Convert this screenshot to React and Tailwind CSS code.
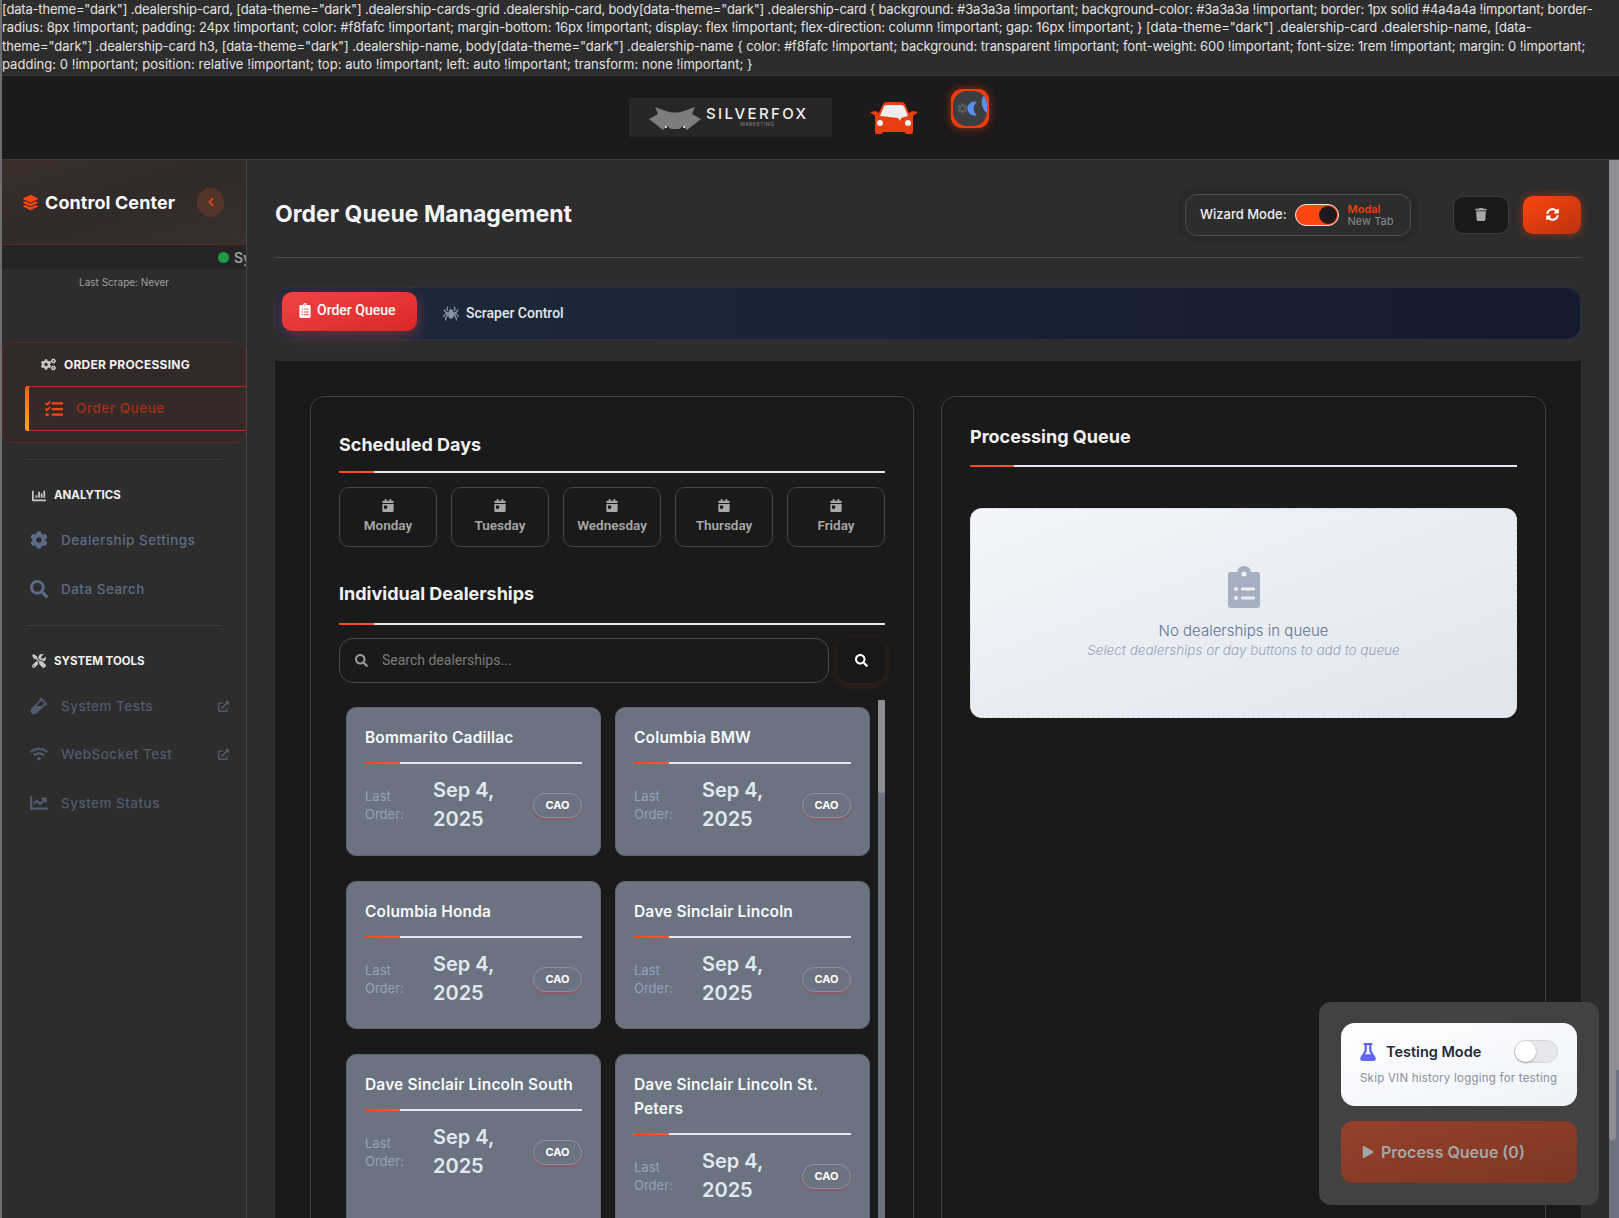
import {
  FaLayerGroup, FaChevronLeft, FaCogs, FaTasks, FaChartBar, FaCog, FaSearch, FaTools, FaVial, FaWifi,
  FaChartLine, FaExternalLinkAlt, FaClipboardList, FaSpider, FaCalendarDay, FaTrash, FaSyncAlt, FaFlask, FaPlay,
} from "react-icons/fa";

const DAYS = ["Monday", "Tuesday", "Wednesday", "Thursday", "Friday"];

const CARDS = [
  ["Bommarito Cadillac", "h-[149px]"],
  ["Columbia BMW", "h-[149px]"],
  ["Columbia Honda", "h-[148px]"],
  ["Dave Sinclair Lincoln", "h-[148px]"],
  ["Dave Sinclair Lincoln South", "h-[200px]"],
  ["Dave Sinclair Lincoln St. Peters", "h-[200px]"],
];

const CSS_LINES = [
  ['[data-theme="dark"] .dealership-card, [data-theme="dark"] .dealership-cards-grid .dealership-card, body[data-theme="dark"] .dealership-card { background: #3a3a3a !important; background-color: #3a3a3a !important; border: 1px solid #4a4a4a !important; border-', "tracking-[-0.014em]"],
  ['radius: 8px !important; padding: 24px !important; color: #f8fafc !important; margin-bottom: 16px !important; display: flex !important; flex-direction: column !important; gap: 16px !important; } [data-theme="dark"] .dealership-card .dealership-name, [data-', "tracking-[-0.006em]"],
  ['theme="dark"] .dealership-card h3, [data-theme="dark"] .dealership-name, body[data-theme="dark"] .dealership-name { color: #f8fafc !important; background: transparent !important; font-weight: 600 !important; font-size: 1rem !important; margin: 0 !important;', "tracking-[-0.007em]"],
  ["padding: 0 !important; position: relative !important; top: auto !important; left: auto !important; transform: none !important; }", "tracking-[0.002em]"],
];

function Underline({ accent = "w-[35px]" }) {
  return (
    <div className="h-[2px] bg-[#e2e8f0]">
      <div className={`h-[2px] bg-gradient-to-r from-[#ff4510] to-[#f8553a] ${accent}`} />
    </div>
  );
}

function SectionTitle({ icon: Icon, children, className = "" }) {
  return (
    <div className={`flex items-center text-[11.5px] font-bold uppercase text-[#f1f1f1] ${className}`}>
      <Icon className="mr-[8px] h-[14px] w-[14px] text-[#c8c8c8]" />
      {children}
    </div>
  );
}

function NavItem({ icon: Icon, label, external, dim }) {
  return (
    <div className={`flex items-center pl-[28px] pr-[17px] text-[13.5px] font-medium tracking-[0.035em] ${dim ? "text-[#4f5b6e]" : "text-[#5c6c85]"}`}>
      <Icon className="mr-[13px] h-[18px] w-[18px] shrink-0" />
      <span className="flex-1">{label}</span>
      {external && <FaExternalLinkAlt className="h-[11px] w-[11px] text-[#4f5b6e]" />}
    </div>
  );
}

function Sidebar() {
  return (
    <aside className="relative flex w-[245px] shrink-0 flex-col overflow-hidden border-r border-[#454545] bg-[#2d2d2d]">
      <div className="flex h-[85px] items-center border-b border-[#5a2c20] bg-gradient-to-br from-[#3a2e2a] via-[#302a28] to-[#38302d] pl-[21px] pr-[22px]">
        <FaLayerGroup className="mr-[7px] h-[15px] w-[15px] text-[#ff4510]" />
        <span className="flex-1 text-[18px] font-bold tracking-[0.005em] text-[#f8fafc]">Control Center</span>
        <div className="flex h-[29px] w-[27px] items-center justify-center rounded-full bg-[#55352b]">
          <FaChevronLeft className="h-[10px] w-[10px] text-[#e8481c]" />
        </div>
      </div>
      <div className="flex h-[24px] items-center bg-[#252525] pl-[216px]">
        <span className="h-[11px] w-[11px] shrink-0 rounded-full bg-[#1f9a4b]" />
        <span className="ml-[5px] text-[14px] font-semibold text-[#a0a0a0]">System</span>
      </div>
      <div className="mt-[6px] text-center text-[10px] text-[#a0a0a0]">Last Scrape: Never</div>

      <div className="mt-[52px] h-[101px] rounded-l-[10px] rounded-r-[12px] border border-[#5a2a20] bg-[#332a28]">
        <div className="flex h-[43px] items-center pl-[38px] text-[12px] font-bold uppercase tracking-[0.02em] text-[#f1f1f1]">
          <FaCogs className="mr-[8px] h-[15px] w-[15px] text-[#c8c8c8]" />
          Order Processing
        </div>
        <div className="relative ml-[23px] flex h-[45px] items-center border-y border-l border-[#b93416] bg-[#352a28] pl-[18px] text-[13.5px] font-medium tracking-[0.04em] text-[#a5301a]">
          <span className="absolute -left-[2px] -top-px h-[45px] w-[4px] rounded-l-[3px] bg-gradient-to-b from-[#ff5a10] to-[#ffa510]" />
          <FaTasks className="mr-[13px] h-[18px] w-[18px] text-[#ff4510]" />
          Order Queue
        </div>
      </div>

      <div className="mx-[24px] mt-[16px] h-px bg-[#3d3d3d]" />
      <SectionTitle icon={FaChartBar} className="mt-[27px] pl-[30px]">Analytics</SectionTitle>
      <div className="mt-[26px] flex flex-col gap-[28px]">
        <NavItem icon={FaCog} label="Dealership Settings" />
        <NavItem icon={FaSearch} label="Data Search" />
      </div>
      <div className="mx-[24px] mt-[26px] h-px bg-[#3d3d3d]" />
      <SectionTitle icon={FaTools} className="mt-[27px] pl-[30px]">System Tools</SectionTitle>
      <div className="mt-[26px] flex flex-col gap-[28px]">
        <NavItem icon={FaVial} label="System Tests" external dim />
        <NavItem icon={FaWifi} label="WebSocket Test" external dim />
        <NavItem icon={FaChartLine} label="System Status" dim />
      </div>
    </aside>
  );
}

function DealerCard({ name, height }) {
  return (
    <div className={`overflow-hidden rounded-[10px] border border-[#5f6673] bg-[#6b7280] px-[18px] pt-[18px] ${height}`}>
      <div className="pb-[12px] text-[15.5px] font-semibold leading-[24px] tracking-[0.01em] text-[#f8fafc]">{name}</div>
      <Underline />
      <div className="mt-[12px] flex items-center">
        <div className="w-[68px] text-[13px] leading-[18px] text-[#94a3b8]">Last<br />Order:</div>
        <div className="flex-1 text-[20px] font-semibold leading-[29px] text-[#e2e8f0]">Sep 4,<br />2025</div>
        <div className="flex h-[25px] w-[49px] items-center justify-center rounded-full border border-[#8d93a0] text-[11px] font-bold text-white shadow-[0_2px_2px_rgba(190,60,70,0.45)]">CAO</div>
      </div>
    </div>
  );
}

function ScheduledPanel() {
  return (
    <section className="h-[900px] w-[604px] shrink-0 overflow-hidden rounded-[14px] border border-[#424242] px-[28px] pt-[35px]">
      <h3 className="pb-[13px] text-[18px] font-bold leading-[26px] text-[#f1f1f1]">Scheduled Days</h3>
      <Underline />
      <div className="mt-[14px] grid grid-cols-5 gap-[14px]">
        {DAYS.map((day) => (
          <button key={day} type="button" className="flex h-[60px] flex-col items-center justify-center rounded-[10px] border border-[#464646] font-[Roboto,sans-serif] text-[13.5px] font-semibold text-[#a8a8a8]">
            <FaCalendarDay className="mb-[3px] h-[13px] w-[12px]" />
            {day}
          </button>
        ))}
      </div>

      <h3 className="mt-[34px] pb-[16px] text-[18px] font-bold leading-[26px] text-[#f1f1f1]">Individual Dealerships</h3>
      <Underline />
      <div className="mt-[13px] flex gap-[8px]">
        <div className="flex h-[45px] flex-1 items-center rounded-[14px] border border-[#484848] pl-[15px] font-[Roboto,sans-serif] text-[14px] text-[#7a7a7a]">
          <FaSearch className="mr-[14px] h-[13px] w-[13px] text-[#9a9a9a]" />
          Search dealerships...
        </div>
        <button type="button" className="flex h-[45px] w-[48px] items-center justify-center rounded-[12px] bg-[#181818] shadow-[0_2px_8px_rgba(180,60,20,0.25)]">
          <FaSearch className="h-[13px] w-[13px] text-white" />
        </button>
      </div>

      <div className="mt-[17px] flex gap-[8px]">
        <div className="ml-[7px] grid flex-1 grid-cols-2 content-start gap-x-[14px] gap-y-[25px] pt-[7px]">
          {CARDS.map(([name, height]) => (
            <DealerCard key={name} name={name} height={height} />
          ))}
        </div>
        <div className="h-[600px] w-[7px] shrink-0 bg-[#6b7280]">
          <div className="h-[93px] rounded-[2px] bg-[#8e8e93]" />
        </div>
      </div>
    </section>
  );
}

function QueuePanel() {
  return (
    <section className="h-[900px] w-[605px] shrink-0 rounded-[14px] border border-[#424242] px-[28px] pt-[27px]">
      <h3 className="pb-[15px] text-[18px] font-bold leading-[26px] text-[#f1f1f1]">Processing Queue</h3>
      <Underline accent="w-[44px]" />
      <div className="mt-[41px] flex h-[210px] flex-col items-center rounded-[12px] border border-dashed border-[#d5dbe4] bg-gradient-to-br from-[#f3f5f9] to-[#e0e5ee] pt-[57px]">
        <svg viewBox="0 0 32 42" className="h-[42px] w-[32px]">
          <path d="M3 6 L9 6 Q10 0 16 0 Q22 0 23 6 L29 6 Q32 6 32 9 L32 39 Q32 42 29 42 L3 42 Q0 42 0 39 L0 9 Q0 6 3 6 Z" fill="#a6afbf" />
          <circle cx="16" cy="8" r="2.6" fill="#eceff4" />
          <circle cx="8" cy="23" r="2" fill="#eceff4" />
          <circle cx="8" cy="32" r="2" fill="#eceff4" />
          <rect x="13" y="21.5" width="14" height="3" rx="1" fill="#eceff4" />
          <rect x="13" y="30.5" width="14" height="3" rx="1" fill="#eceff4" />
        </svg>
        <div className="mt-[13px] text-[15px] font-light leading-[20px] text-[#64748b]">No dealerships in queue</div>
        <div className="text-[13.5px] font-light italic leading-[19px] text-[#94a3b8]">Select dealerships or day buttons to add to queue</div>
      </div>
    </section>
  );
}

function FloatingPanel() {
  return (
    <div className="absolute left-[1317px] top-[1002px] flex h-[203px] w-[280px] flex-col gap-[15px] rounded-[12px] bg-[#424242] px-[22px] pt-[21px]">
      <div className="h-[83px] rounded-[14px] bg-gradient-to-br from-white to-[#eef2f8] px-[19px] pt-[17px]">
        <div className="flex items-center">
          <FaFlask className="mr-[10px] h-[18px] w-[16px] text-[#6366f1]" />
          <span className="flex-1 text-[14.5px] font-semibold text-[#1e293b]">Testing Mode</span>
          <div className="h-[23px] w-[44px] rounded-full border border-[#d5d5da] bg-[#e5e7eb]">
            <div className="h-[21px] w-[21px] rounded-full bg-white shadow-[0_1px_2px_rgba(0,0,0,0.3)]" />
          </div>
        </div>
        <div className="mt-[7px] whitespace-nowrap text-[11.5px] tracking-[0.02em] text-[#8890a0]">Skip VIN history logging for testing</div>
      </div>
      <button type="button" className="flex h-[62px] items-center rounded-[12px] bg-gradient-to-br from-[#96412a] to-[#7c3623] pl-[21px] text-[16px] font-semibold text-[#a6a6a6]">
        <FaPlay className="mr-[7px] h-[12px] w-[12px]" />
        Process Queue (0)
      </button>
    </div>
  );
}

function Logo() {
  return (
    <div className="flex h-[39px] w-[203px] items-center rounded-[1px] bg-[#282627] pl-[20px]">
      <svg viewBox="0 0 52 24" className="mr-[5px] h-[24px] w-[52px] shrink-0">
        <path d="M0 13 L9 8 L6 1 L17 5 Q26 8 35 5 L46 1 L43 8 L52 13 L38 24 L34 20 L30 23 L22 23 L18 20 L14 24 Z" fill="#7d7d7d" />
        <circle cx="17" cy="21" r="1" fill="#eee" />
        <circle cx="35" cy="21" r="1" fill="#eee" />
      </svg>
      <div className="flex flex-col items-center">
        <span className="text-[15px] font-medium leading-[14px] tracking-[0.16em] text-[#f2f2f2]">SILVERFOX</span>
        <span className="text-[5px] leading-[7px] tracking-[0.1em] text-[#8a8a8a]">MARKETING</span>
      </div>
    </div>
  );
}

function CarIcon() {
  return (
    <svg viewBox="0 0 48 32" className="h-[32px] w-[48px]">
      <path d="M9 11 L13 2 Q14 0 17 0 L31 0 Q34 0 35 2 L39 11 L42 9 L48 10 L43 14 L43 30 Q43 32 41 32 L37 32 Q35 32 35 30 L13 30 Q13 32 11 32 L7 32 Q5 32 5 30 L5 14 L0 10 L6 9 Z" fill="#e93f10" />
      <path d="M10 14 L14 4 Q15 3 17 3 L31 3 Q33 3 34 4 L38 14 L31 16 L30 19 L28 16 Z" fill="#eeeeee" />
      <circle cx="10" cy="21" r="3" fill="#f5f5f5" />
      <circle cx="38" cy="21" r="3" fill="#f5f5f5" />
    </svg>
  );
}

function ThemeToggle() {
  return (
    <div className="relative h-[39px] w-[38px] -translate-y-[9px] overflow-hidden rounded-[11px] bg-[#f03d0c] p-[2px] shadow-[0_0_8px_rgba(240,61,12,0.6)]">
      <div className="relative h-full w-full overflow-hidden rounded-[14px] bg-[#3c3e43]">
        <FaCog className="absolute left-[4px] top-[12px] h-[11px] w-[11px] text-[#5a5a5a]" />
        <svg viewBox="0 0 34 35" className="absolute inset-0 h-full w-full">
          <path d="M24 11 A7 7 0 1 0 24 24 A8 8 0 0 1 24 11 Z" fill="#5b8def" />
          <path d="M34 1 A12 12 0 0 0 29 14 Q30 19 34 22 Z" fill="#5b8def" />
        </svg>
      </div>
    </div>
  );
}

export default function App() {
  return (
    <div className="relative flex h-[1218px] w-[1619px] flex-col overflow-hidden border-l-[2px] border-[#6e6e6e] bg-[#2d2d2d] font-[Inter,sans-serif]">
      <div className="h-[76px] shrink-0 border-b border-[#3a3a3a] text-[13px] leading-[18.4px] text-[#e4e4e4]">
        {CSS_LINES.map(([line, tracking]) => (
          <div key={line} className={`whitespace-nowrap ${tracking}`}>{line}</div>
        ))}
      </div>

      <header className="flex h-[84px] shrink-0 items-center border-b border-[#3c3c3c] bg-[#1c1a1b] pl-[627px]">
        <Logo />
        <div className="ml-[38px]"><CarIcon /></div>
        <div className="ml-[33px]"><ThemeToggle /></div>
      </header>

      <div className="flex min-h-0 flex-1">
        <Sidebar />

        <main className="min-w-0 flex-1 overflow-hidden px-[28px]">
          <div className="flex h-[98px] items-center border-b border-[#4a4a4a] pt-[12px]">
            <h1 className="flex-1 text-[23px] font-bold text-[#f4f6f9]">Order Queue Management</h1>
            <div className="flex h-[42px] w-[226px] items-center rounded-[12px] border border-[#4e4e4e] pl-[14px] shadow-[0_0_0_7px_rgba(38,38,38,0.6)]">
              <span className="mr-[8px] whitespace-nowrap text-[13px] font-medium text-[#f1f1f1]">Wizard Mode:</span>
              <div className="mr-[9px] flex h-[22px] w-[44px] shrink-0 items-center justify-end rounded-full border border-[#e8e8e8] bg-[#ff4510] pr-[1px]">
                <span className="h-[18px] w-[18px] rounded-full bg-[#1c1a1b]" />
              </div>
              <div className="flex flex-col text-[11px] leading-[12px]">
                <span className="font-semibold text-[#f03d0c]">Modal</span>
                <span className="text-[#8c8c8c]">New Tab</span>
              </div>
            </div>
            <button type="button" className="ml-[42px] flex h-[38px] w-[56px] items-center justify-center rounded-[10px] border border-[#3c3c3c] bg-[#1a1a1a]">
              <FaTrash className="h-[13px] w-[12px] text-[#a8a8a8]" />
            </button>
            <button type="button" className="ml-[14px] flex h-[38px] w-[58px] items-center justify-center rounded-[10px] bg-gradient-to-br from-[#ff4510] to-[#b9330e] shadow-[0_0_10px_rgba(240,61,12,0.5)]">
              <FaSyncAlt className="h-[13px] w-[13px] text-white" />
            </button>
          </div>

          <div className="mt-[29px] flex h-[53px] items-start rounded-[14px] border border-[#263145] bg-gradient-to-r from-[#1e293b] to-[#141b2c] pl-[6px] pt-[4px] font-[Roboto,sans-serif] text-[14px] font-medium">
            <div className="flex h-[39px] w-[135px] items-center rounded-[10px] bg-gradient-to-br from-[#ef4444] to-[#dc2626] pb-[2px] pl-[17px] text-white shadow-[0_4px_14px_rgba(239,68,68,0.4)]">
              <FaClipboardList className="mr-[6px] h-[15px] w-[12px]" />
              Order Queue
            </div>
            <div className="ml-[26px] flex items-center self-center pb-[4px] text-[#e2e8f0]">
              <FaSpider className="mr-[7px] h-[15px] w-[16px] text-[#8694a8]" />
              Scraper Control
            </div>
          </div>

          <div className="mt-[21px] flex h-[900px] gap-[27px] bg-[#1a1a1a] pl-[35px] pt-[35px]">
            <ScheduledPanel />
            <QueuePanel />
          </div>
        </main>

        <div className="relative w-[10px] shrink-0 bg-[#6b7280]">
          <div className="h-[910px] bg-[#8e8e93]" />
          <div className="absolute left-0 top-0 h-[980px] w-[7px] rounded-b-[3px] bg-[#8e8e93]" />
        </div>
      </div>

      <FloatingPanel />
    </div>
  );
}
